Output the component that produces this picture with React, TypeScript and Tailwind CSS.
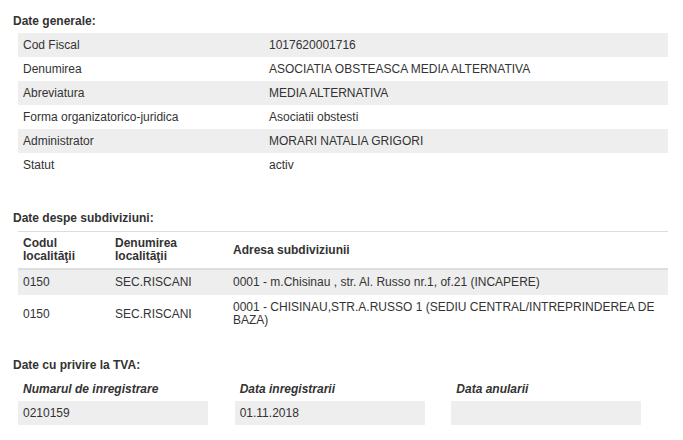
import React from "react";

const general: [string, string][] = [
  ["Cod Fiscal", "1017620001716"],
  ["Denumirea", "ASOCIATIA OBSTEASCA MEDIA ALTERNATIVA"],
  ["Abreviatura", "MEDIA ALTERNATIVA"],
  ["Forma organizatorico-juridica", "Asociatii obstesti"],
  ["Administrator", "MORARI NATALIA GRIGORI"],
  ["Statut", "activ"],
];

const subdiv: [string, string, string][] = [
  ["0150", "SEC.RISCANI", "0001 - m.Chisinau , str. Al. Russo nr.1, of.21 (INCAPERE)"],
  ["0150", "SEC.RISCANI", "0001 - CHISINAU,STR.A.RUSSO 1 (SEDIU CENTRAL/INTREPRINDEREA DE BAZA)"],
];

export default function App() {
  return (
    <div
      className="w-[683px] h-[440px] bg-white text-[#333] text-[12px] overflow-hidden"
      style={{ fontFamily: '"Liberation Sans", Arial, sans-serif' }}
    >
      <div className="pl-[13px] pr-[15px]">
        <div className="mt-[14px] h-[14px] leading-[14px] font-bold">Date generale:</div>
        <div className="mt-[5px] ml-[5px] flex flex-col">
          {general.map(([k, v], i) => (
            <div
              key={k}
              className={`flex h-[24px] items-center leading-[14px] ${i % 2 === 0 ? "bg-[#eeeeee]" : ""}`}
            >
              <div className="w-[246px] pl-[5px]">{k}</div>
              <div className="pl-[5px]">{v}</div>
            </div>
          ))}
        </div>

        <div className="mt-[34px] h-[14px] leading-[14px] font-bold">Date despe subdiviziuni:</div>
        <div className="mt-[6px] ml-[5px] border-t border-[#dddddd]">
          <div className="flex items-center border-b-2 border-[#dddddd] py-[5px] font-bold leading-[13px]">
            <div className="w-[92px] pl-[5px]">
              Codul
              <br />
              localităţii
            </div>
            <div className="w-[118px] pl-[5px]">
              Denumirea
              <br />
              localităţii
            </div>
            <div className="flex-1 pl-[5px]">Adresa subdiviziunii</div>
          </div>
          {subdiv.map(([a, b, c], i) => (
            <div
              key={i}
              className={`flex items-center py-[6px] leading-[13px] ${i % 2 === 0 ? "bg-[#eeeeee]" : ""}`}
            >
              <div className="w-[92px] pl-[5px]">{a}</div>
              <div className="w-[118px] pl-[5px]">{b}</div>
              <div className="flex-1 pl-[5px] pr-[5px]">{c}</div>
            </div>
          ))}
        </div>

        <div className="mt-[25px] h-[14px] leading-[14px] font-bold">Date cu privire la TVA:</div>
        <div className="ml-[5px] grid grid-cols-3">
          {[
            ["Numarul de inregistrare", "0210159"],
            ["Data inregistrarii", "01.11.2018"],
            ["Data anularii", ""],
          ].map(([l, v]) => (
            <div key={l}>
              <div className="mt-[10px] h-[14px] leading-[14px] pl-[5px] italic font-bold">{l}</div>
              <div className="mt-[5px] w-[190px] h-[24px] leading-[24px] pl-[5px] bg-[#eeeeee]">{v}</div>
            </div>
          ))}
        </div>
      </div>
    </div>
  );
}
